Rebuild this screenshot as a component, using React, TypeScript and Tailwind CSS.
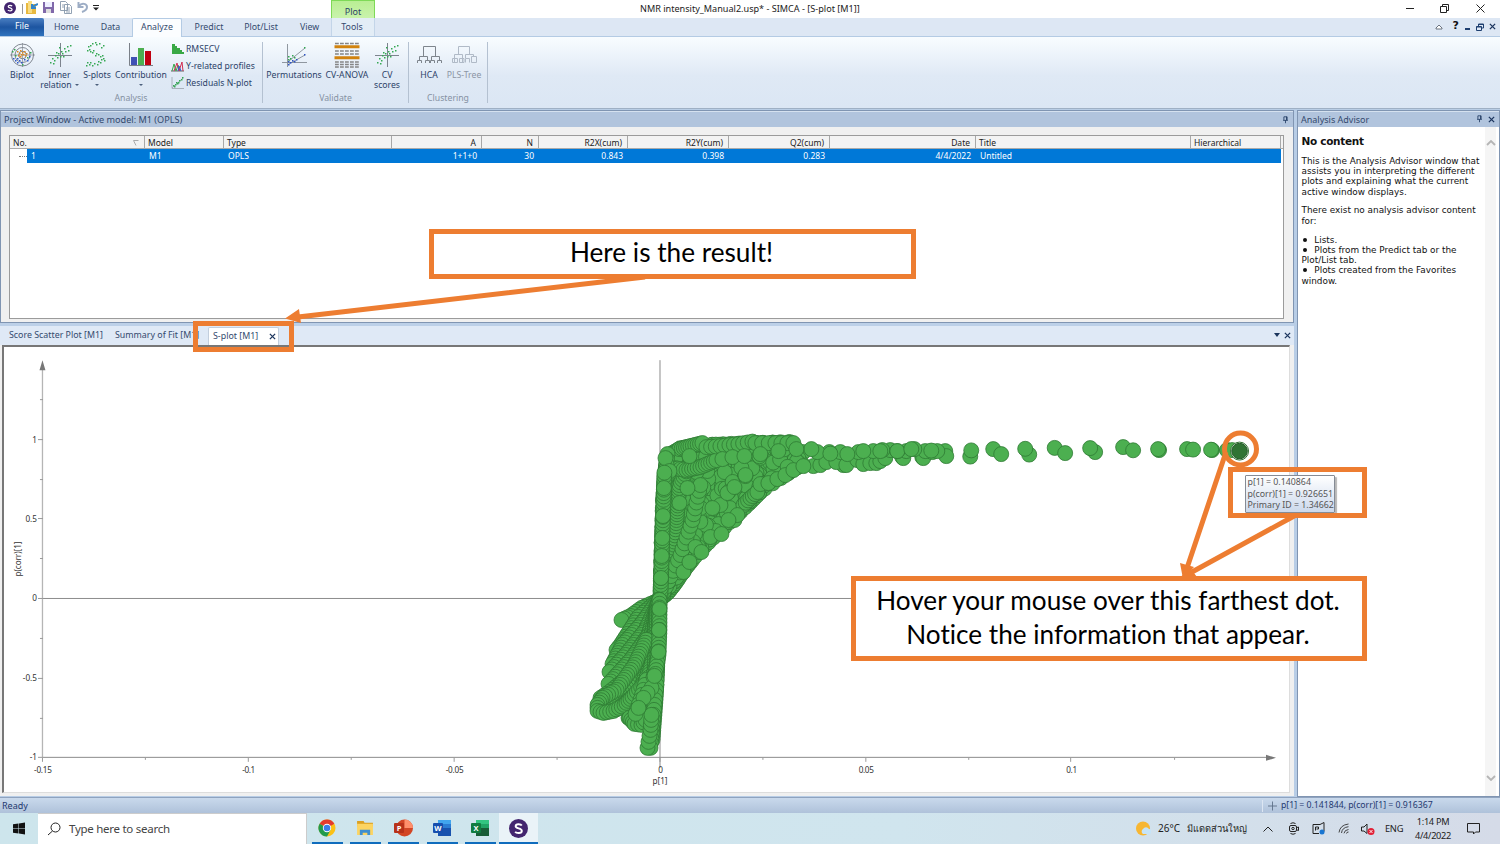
import React from "react";

type Pt = [number, number];

/* ---------- deterministic point cloud ---------- */
let seed = 7;
const rnd = () => {
  seed = (seed * 16807) % 2147483647;
  return seed / 2147483647;
};

const along = (path: Pt[], s: number): Pt => {
  const n = path.length - 1;
  const f = Math.min(n - 0.0001, Math.max(0, s * n));
  const i = Math.floor(f);
  const t = f - i;
  return [path[i][0] + (path[i + 1][0] - path[i][0]) * t, path[i][1] + (path[i + 1][1] - path[i][1]) * t];
};

const strand = (path: Pt[], step: number): Pt[] => {
  const out: Pt[] = [];
  for (let i = 0; i < path.length - 1; i++) {
    const [a, b] = [path[i], path[i + 1]];
    const d = Math.hypot(b[0] - a[0], b[1] - a[1]);
    const n = Math.max(1, Math.round(d / step));
    for (let k = 0; k < n; k++) out.push([a[0] + ((b[0] - a[0]) * k) / n, a[1] + ((b[1] - a[1]) * k) / n]);
  }
  out.push(path[path.length - 1]);
  return out;
};

const upperLeft: Pt[] = [[660, 598], [661, 550], [662.5, 500], [665, 470], [667, 456], [680, 448], [702, 445], [750, 443], [792, 442]];
const lowerRight: Pt[] = [[661, 598], [668, 592], [675, 583], [683, 571], [699, 551], [722, 529], [746, 506], [762, 490], [802, 464]];

const cloud: Pt[] = [];
for (let u = 0; u <= 20; u++) {
  const m = u / 20;
  const bend = (rnd() - 0.5) * 0.1;
  for (let s = 0; s <= 1; s += 0.018 + rnd() * 0.012) {
    const a = along(upperLeft, s);
    const b = along(lowerRight, s);
    const k = Math.min(1, Math.max(0, m + bend));
    cloud.push([a[0] + (b[0] - a[0]) * k, a[1] + (b[1] - a[1]) * k]);
  }
}
for (let i = 0; i < 420; i++) {
  const s = Math.pow(rnd(), 0.75);
  const a = along(upperLeft, s);
  const b = along(lowerRight, s);
  const k = rnd();
  cloud.push([a[0] + (b[0] - a[0]) * k, a[1] + (b[1] - a[1]) * k]);
}
cloud.push(
  ...strand([[661, 596], [672, 560], [676, 520], [679, 485], [690, 463]], 3),
  ...strand([[663, 592], [680, 555], [692, 520], [700, 485]], 6),
  ...strand([[674, 468], [686, 470], [700, 467], [716, 460]], 3),
  ...strand([[679, 449], [690, 446], [702, 443]], 2.4),
  ...strand([[706, 447], [720, 446], [738, 444], [752, 441.5]], 5),
  ...strand([[755, 443], [775, 443], [793, 443]], 6),
  ...strand([[743, 505], [750, 498], [757, 492]], 3),
  ...strand([[667, 454], [666, 464], [665, 484]], 5),
  [683, 572], [689, 562], [695, 547], [710, 537], [721, 534], [701, 552], [734, 520], [737, 515], [728, 520],
  [720, 505], [712, 508], [728, 492], [727, 493], [734, 487], [760, 484], [768, 483], [777, 479], [785, 475], [793, 470], [803, 466],
  [745, 476], [745, 475], [722, 459], [732, 457], [744, 456], [760, 454], [778, 451], [796, 449], [687, 488], [689, 456], [679, 503], [665, 458], [669, 471],
);
const column: Pt[] = [];
for (let y = 595; y > 470; y -= 3.4) column.push([664 - ((y - 470) / 125) * 4, y]);
for (const y of [578, 556, 538, 516, 488]) column.push([664 - ((y - 470) / 125) * 4, y]);

const lower: Pt[] = [];
[
  [[659, 600], [641, 608], [630, 616], [621, 620]],
  [[658, 600], [638, 617], [620, 645], [616, 650]],
  [[658, 600], [640, 625], [622, 645], [612, 664]],
  [[658, 602], [645, 630], [625, 655], [609, 672]],
  [[658, 602], [648, 635], [630, 660], [608, 684]],
  [[657, 606], [650, 640], [630, 675], [609, 692], [600, 698]],
  [[657, 610], [652, 645], [636, 680], [617, 697], [602, 703]],
  [[657, 610], [653, 650], [640, 690], [620, 707]],
  [[656, 612], [652, 655], [643, 690], [628, 718]],
  [[656, 615], [651, 665], [643, 700], [634, 720]],
  [[657, 610], [654, 670], [648, 705], [640, 724]],
  [[659, 605], [657, 660], [655, 700], [652, 740]],
].forEach((p) => lower.push(...strand(p as Pt[], 3.2)));
lower.push(
  ...strand([[646, 640], [634, 665], [616, 690], [602, 698], [597, 705], [597, 711], [603, 713], [613, 711], [624, 705], [632, 697], [645, 682]], 3.2),
  ...strand([[629, 718], [634, 724], [641, 725], [645, 720]], 3),
  ...strand([[646, 680], [640, 700], [635, 714]], 5),
  ...strand([[657, 650], [656, 685], [653, 715], [650, 748], [647, 748], [648, 742], [650, 730], [651, 715]], 5),
  ...strand([[655, 668], [653, 677], [651, 688], [643, 698], [638, 708]], 8),
  ...strand([[659, 600], [659, 630], [658, 655], [655, 674]], 3.6),
  [659, 609], [658.5, 630], [658, 652], [654, 676],
);

const tail: Pt[] = [
  [803, 452], [813, 466], [820, 465], [826, 462], [843, 465], [836, 462], [850, 458], [846, 465], [857, 460], [863, 464], [870, 463],
  [876, 463], [880, 461], [885, 458], [902, 457], [903, 458], [890, 450], [922, 457], [923, 458], [932, 452], [945, 451], [946, 456],
  [925, 451], [914, 449], [906, 451], [897, 451], [882, 450], [873, 451], [858, 452], [840, 452], [829, 452], [817, 452], [811, 449],
  [830, 453.5], [847, 454], [863, 451], [880, 451], [897, 451], [911, 449], [937, 451], [931, 450.5],
  [970, 456.5], [971, 450.3], [993, 449], [1001, 454], [1029, 454.5], [1025, 448.7], [1054.5, 447.8], [1065, 453], [1095, 452], [1090, 448],
  [1123, 447], [1133, 450.2], [1159, 450], [1158, 449], [1187, 449], [1193, 449.5], [1212, 450], [1211, 449.6], [1227, 450], [1232, 450],
];

const Dots = ({ pts }: { pts: Pt[] }) => (
  <g fill="#4caf50" stroke="#2f7a34" strokeWidth="0.8">
    {pts.map(([x, y], i) => (
      <circle key={i} cx={x} cy={y} r="7.5" />
    ))}
  </g>
);

/* ---------- small icons ---------- */
const specks: Pt[] = [[3, 20], [5, 16], [7, 18], [8, 13], [10, 15], [11, 11], [13, 14], [14, 9], [15, 11], [17, 6], [18, 9], [20, 4], [21, 8], [23, 3], [6, 21], [16, 14], [12, 5], [9, 10]];
const Speckle = ({ pts, color = "#35a853" }: { pts: Pt[]; color?: string }) => (
  <g fill={color}>
    {pts.map(([x, y], i) => (
      <rect key={i} x={x} y={y} width="1.5" height="1.5" />
    ))}
  </g>
);
const Ico = ({ children }: { children: React.ReactNode }) => (
  <svg viewBox="0 0 26 26" className="h-[26px] w-[26px] shrink-0" fill="none">
    {children}
  </svg>
);
const BiplotIcon = () => (
  <Ico>
    <g stroke="#747b84" strokeWidth=".9">
      <circle cx="13.500" cy="13" r="11" /><circle cx="13.500" cy="13" r="7.500" /><circle cx="13.500" cy="13" r="3.800" />
      <path d="M13.500 1v24M1 13h25" strokeWidth=".6" />
    </g>
    <Speckle pts={[[8, 9], [10, 11], [11, 8], [13, 10], [15, 9], [17, 11], [9, 13], [12, 12], [14, 12], [16, 13], [11, 14]]} color="#e08a1e" />
    <Speckle pts={[[4, 16], [6, 18], [8, 16], [8, 20], [10, 18], [12, 20], [15, 17], [18, 18], [20, 14]]} color="#3058c8" />
    <Speckle pts={[[3, 9], [5, 7], [21, 10], [18, 15], [13, 22], [6, 13]]} />
  </Ico>
);
const CrossScatter = () => (
  <Ico><path d="M13.500 1v24M1 13.500h24" stroke="#7d848e" /><Speckle pts={specks} /></Ico>
);
const SPlotIcon = () => (
  <Ico>
    <Speckle pts={[[17, 5], [19, 3], [15, 1], [12, 2], [11, 0], [8, 1], [6, 3], [4, 4], [5, 7], [3, 8], [6, 9], [8, 10], [9, 8], [12, 11], [11, 13], [14, 12], [16, 14], [18, 13], [19, 16], [17, 17], [20, 18], [16, 20], [14, 19], [13, 22], [10, 21], [8, 23], [5, 22], [6, 20], [3, 20], [2, 23]]} />
  </Ico>
);
const ContributionIcon = () => (
  <Ico>
    <path d="M1.500 1v22.500H25" stroke="#7a8088" />
    <path fill="#3f51b5" d="M3 15h6v8H3z" /><path fill="#4caf50" d="M10 6h6v17h-6z" /><path fill="#c00010" d="M17 9h6v14h-6z" />
  </Ico>
);
const PermIcon = () => (
  <Ico>
    <path d="M6.500 2v23M1 20.500h25M6 20.500 24 6M7 22.500 24 13" stroke="#858c95" strokeWidth=".9" />
    <Speckle pts={[[23, 5], [7, 14], [9, 16], [11, 13], [7, 17], [13, 15]]} />
    <Speckle pts={[[23, 12], [7, 19], [9, 20], [11, 18], [7, 22], [13, 19], [15, 17]]} color="#2f55c5" />
  </Ico>
);
const AnovaIcon = () => (
  <Ico>
    <g stroke="#858585" strokeDasharray="3.800 1.200"><path d="M1 1.500h24M1 9h24M1 12h24M1 20h24M1 22.500h24M1 25h24" strokeWidth="1.400" /></g>
    <path d="M.5 4.700h25M.5 15.700h25" stroke="#d1830f" strokeWidth="3" />
  </Ico>
);
const TreeIcon = ({ color, many }: { color: string; many?: boolean }) => (
  <Ico>
    {many ? (
      <path d="M7.500 14V4.500h12V14M3.500 18v-3.500h8V18M15.500 18v-3.500h8V18M1.500 21v-2.500h4V21M9.500 21v-2.500h4V21M14.500 21v-2.500h4V21M21.500 21v-2.500h4V21" stroke={color} />
    ) : (
      <path d="M7.500 12.500v-8h11v8M3.500 20v-7.500h8V20M14.500 16v-3.500h8V15M1.500 20.500h5v-4h-5zM8.500 20.500h4.500v-4H8.500zM14.500 20.500v-4h4v4M20.500 20.500v-6h5v6z" stroke={color} />
    )}
  </Ico>
);

const Caret = () => <span className="h-0 w-0 border-x-[2px] border-t-[2.500px] border-x-transparent border-t-[#4b5f7c]" />;

const RibbonButton = ({ icon, a, b, caret, box, muted }: { icon: React.ReactNode; a: string; b?: string; caret?: boolean; box: string; muted?: boolean }) => (
  <div className={`flex flex-col items-center text-[8.700px] leading-[10px] whitespace-nowrap ${box} ${muted ? "text-[#8c96a5]" : "text-[#2c4268]"}`}>
    {icon}
    <span className="mt-[2px]">{a}</span>
    {b ? (
      <span className="flex items-center gap-[3px]">
        {b}
        {caret && <Caret />}
      </span>
    ) : (
      caret && <span className="mt-[4px] flex"><Caret /></span>
    )}
  </div>
);

const Group = ({ title, box, children }: { title: string; box: string; children: React.ReactNode }) => (
  <div className={`flex h-[61px] flex-col border-r border-[#b4c1d1] ${box}`}>
    <div className="flex h-[51px]">{children}</div>
    <div className="text-center text-[8.700px] leading-[10px] text-[#8591a3]">{title}</div>
  </div>
);

const Pin = () => (
  <svg viewBox="0 0 8 10" className="h-[8px] w-[7px]" fill="none" stroke="#1b355d"><path d="M2 5V1h4v4M1 5.500h6M4 5.500V9M5.300 1v4" /></svg>
);
const Cross = ({ c = "#1b355d", size = "h-[7px] w-[7px]" }: { c?: string; size?: string }) => (
  <svg viewBox="0 0 8 8" className={size} stroke={c} strokeWidth="1.500"><path d="m1 1 6 6M7 1 1 7" /></svg>
);

const Badge = ({ size }: { size: string }) => (
  <svg viewBox="0 0 20 20" className={size}>
    <circle cx="10" cy="10" r="10" fill="#43256f" />
    <path d="M13.500 6.800C12.500 5.300 7 4.700 7 7.600c0 2.900 6.500 1.600 6.500 4.900 0 3-5.800 2.700-7 .8" fill="none" stroke="#fff" strokeWidth="2" />
  </svg>
);

/* ---------- title bar and ribbon ---------- */
const TitleBar = () => (
  <div className="flex h-[18px] items-center bg-white text-[10px]">
    <div className="flex w-[331px] items-center pl-[4px]">
      <span className="mt-[-2px]"><Badge size="h-[12px] w-[12px]" /></span>
      <span className="ml-[6px] h-[10px] w-px bg-[#999]" />
      <svg viewBox="0 0 12 13" className="mt-[-4px] ml-[3px] h-[13px] w-[12px]"><path fill="#e9b93f" d="M0 2h5l1 1h4v10H0z" /><path fill="#f8dc83" d="M2 0h4v12H2z" /><path d="M12 3 6 6m0-3v4h4" stroke="#3485ca" strokeWidth="2" fill="none" /></svg>
      <svg viewBox="0 0 11 11" className="mt-[-4px] ml-[5px] h-[11px] w-[11px]"><path fill="#8068aa" d="M0 0h11v11H0z" /><path fill="#eef" d="M2 0h7v5H2z" /><path fill="#ddd" d="M3 7h5v4H3z" /></svg>
      <svg viewBox="0 0 12 13" className="mt-[-4px] ml-[6px] h-[13px] w-[12px]" fill="#fff" stroke="#8697ac" strokeWidth=".9"><path d="M.5.5h5l2 2v7h-7zM4.500 3.500h5l2 2v7h-7z" /><path d="M6 7h4M6 9h4M6 11h4M2 4h2M2 6h2" /></svg>
      <svg viewBox="0 0 12 12" className="mt-[-4px] ml-[5px] h-[12px] w-[12px]" fill="none" stroke="#9dadc5" strokeWidth="2"><path d="M1.500 1v5h5M2 5c3-4 8-2 8 1 0 2-2 4-5 5" /></svg>
      <svg viewBox="0 0 6 6" className="mt-[-3px] ml-[4px] h-[6px] w-[6px]" fill="#222"><path d="M0 0h6v1H0zM0 2.500h6l-3 3z" /></svg>
    </div>
    <div className="h-[18px] w-[44px] border border-b-0 border-[#7ed957] bg-gradient-to-b from-[#b9ee94] to-[#c9f3ab] pt-[5px] text-center text-[9px] leading-[11px] text-[#2c4268]">Plot</div>
    <div className="ml-[265px] w-[224px] text-[9.100px] whitespace-nowrap text-[#222]">NMR intensity_Manual2.usp* - SIMCA - [S-plot [M1]]</div>
    <div className="ml-auto flex items-center pr-[15px] pb-[2px]">
      <span className="h-px w-[8px] bg-[#222]" />
      <svg viewBox="0 0 9 9" className="ml-[26px] h-[9px] w-[9px]" fill="none" stroke="#222"><path d="M.5 2.500h6v6h-6zM2.500 2.500v-2h6v6h-2" /></svg>
      <svg viewBox="0 0 9 9" className="ml-[27px] h-[9px] w-[9px]" stroke="#222"><path d="m.5.5 8 8M8.500.5l-8 8" /></svg>
    </div>
  </div>
);

const tab = "flex items-center justify-center whitespace-nowrap";
const TabBar = () => (
  <div className="flex h-[19px] border-b border-[#b4cbe4] bg-[#dde7f4] text-[8.800px] text-[#344a6e]">
    <div className={`${tab} w-[44px] rounded-t-[2px] bg-gradient-to-b from-[#4a7fc2] via-[#1d55a1] to-[#2f73bd] text-white`}>File</div>
    <div className={`${tab} w-[45px] pt-[2px]`}>Home</div>
    <div className={`${tab} w-[43px] pt-[2px]`}>Data</div>
    <div className={`${tab} h-[19px] w-[50px] rounded-t-[2px] border border-b-0 border-[#b4cbe4] bg-[#fbfdff]`}>Analyze</div>
    <div className={`${tab} w-[54px] pt-[2px]`}>Predict</div>
    <div className={`${tab} w-[50px] pt-[2px]`}>Plot/List</div>
    <div className={`${tab} w-[45px] pt-[2px] pl-[2px]`}>View</div>
    <div className={`${tab} w-[44px] border-x border-[#c3d5e8] bg-[#e3edf6] pt-[2px] pr-[2px]`}>Tools</div>
    <div className="ml-auto flex items-center pr-[4px] pb-px">
      <svg viewBox="0 0 8 6" className="h-[6px] w-[8px]" fill="#fff" stroke="#6b7481"><path d="m1 4 3-3 3 3v1H1z" /></svg>
      <span className="ml-[10px] font-['DejaVu_Sans'] text-[11px] font-bold text-[#111]">?</span>
      <span className="mt-[5px] ml-[6px] h-[2px] w-[5px] bg-[#1e3f70]" />
      <svg viewBox="0 0 8 8" className="ml-[6px] h-[8px] w-[8px]" fill="none" stroke="#1e3f70"><path d="M.5 3.500h5v4h-5zM2.500 3V1h5v4H6M.5 4h5M2.500 1.500h5" /></svg>
      <span className="ml-[5px] flex"><Cross /></span>
    </div>
  </div>
);

const SmallItem = ({ icon, label }: { icon: React.ReactNode; label: string }) => (
  <div className="flex h-[17.300px] shrink-0 items-center gap-[2px] text-[8.650px] leading-[10px] whitespace-nowrap text-[#2c4268]">
    <svg viewBox="0 0 13 12" className="h-[12px] w-[13px]" fill="none">{icon}</svg>
    {label}
  </div>
);

const Ribbon = () => (
  <div className="flex h-[72px] border-b border-[#9fb0c5] bg-gradient-to-b from-[#f8fcff] via-[#dfe9f5] via-55% to-[#dbe6f4] pt-[5px]">
    <Group title="Analysis" box="w-[263px]">
      <RibbonButton box="w-[44px]" icon={<BiplotIcon />} a="Biplot" />
      <RibbonButton box="w-[31px]" icon={<CrossScatter />} a="Inner" b="relation" caret />
      <RibbonButton box="w-[44px]" icon={<SPlotIcon />} a="S-plots" caret />
      <RibbonButton box="w-[44px]" icon={<ContributionIcon />} a="Contribution" caret />
      <div className="mt-[-2px] ml-[8px] flex flex-col">
        <SmallItem label="RMSECV" icon={<path d="M1 1v10h12v-2h-2V7H9V5H6V3H4V1z" fill="#39a845" />} />
        <SmallItem label="Y-related profiles" icon={<><path d="M0 11h13" stroke="#666" /><path d="m1 11 2-7 2 7m0 0 2-6 2 6" stroke="#36a84b" /><path d="m3 11 3-8 2 8 3-9 1 9" stroke="#d22d52" /><path d="m7 11 1-5 2 5" stroke="#3b57cb" /></>} />
        <SmallItem label="Residuals N-plot" icon={<><path d="M1 0v11.500h12M1 11 12 1" stroke="#9aa2ab" strokeWidth=".8" /><Speckle pts={[[2, 8], [4, 7], [5, 5], [7, 5], [8, 3], [10, 2], [11, 0], [3, 9], [6, 6]]} /></>} />
      </div>
    </Group>
    <Group title="Validate" box="w-[146px]">
      <RibbonButton box="w-[62px]" icon={<PermIcon />} a="Permutations" />
      <RibbonButton box="w-[44px]" icon={<AnovaIcon />} a="CV-ANOVA" />
      <RibbonButton box="w-[36px]" icon={<CrossScatter />} a="CV" b="scores" />
    </Group>
    <Group title="Clustering" box="w-[79px]">
      <RibbonButton box="w-[40px]" icon={<TreeIcon color="#7e858d" many />} a="HCA" />
      <RibbonButton box="w-[30px]" icon={<TreeIcon color="#b0bac7" />} a="PLS-Tree" muted />
    </Group>
  </div>
);

/* ---------- project window ---------- */
const cols: { h: string; v: string; w: string; right?: boolean }[] = [
  { h: "No.", v: "1", w: "w-[135px]" },
  { h: "Model", v: "M1", w: "w-[79px]" },
  { h: "Type", v: "OPLS", w: "w-[168px]" },
  { h: "A", v: "1+1+0", w: "w-[90px]", right: true },
  { h: "N", v: "30", w: "w-[57px]", right: true },
  { h: "R2X(cum)", v: "0.843", w: "w-[89px]", right: true },
  { h: "R2Y(cum)", v: "0.398", w: "w-[101px]", right: true },
  { h: "Q2(cum)", v: "0.283", w: "w-[101px]", right: true },
  { h: "Date", v: "4/4/2022", w: "w-[146px]", right: true },
  { h: "Title", v: "Untitled", w: "w-[215px]" },
  { h: "Hierarchical", v: "", w: "w-[90px]" },
];

const ProjectWindow = () => (
  <div className="flex h-[213px] flex-col border border-[#8095b2] bg-[#f0f0f0]">
    <div className="flex h-[16px] items-center justify-between border-t border-[#d5e1ef] bg-[#b1c4dd] pr-[4px] pl-[3px] text-[9.150px] text-[#33496d]">
      Project Window - Active model: M1 (OPLS)
      <Pin />
    </div>
    <div className="mt-[8px] ml-[8px] h-[184px] w-[1275px] border border-[#9b9b9b] bg-white text-[8.500px] leading-[12px]">
      <div className="flex h-[13px] border-b border-[#aaa] bg-[#f3f3f3] text-[#222]">
        {cols.map((c) => (
          <div key={c.h} className={`flex shrink-0 items-center border-r border-[#a8a8a8] pt-[2px] pr-[5px] pl-[3px] ${c.w} ${c.right ? "justify-end" : "justify-between"}`}>
            {c.h}
            {c.h === "No." && <svg viewBox="0 0 6 6" className="h-[6px] w-[6px]" fill="none" stroke="#aaa"><path d="M5.500.5H.5L3 5.500" /></svg>}
          </div>
        ))}
      </div>
      <div className="flex h-[14px] items-center pr-[2px]">
        <span className="ml-[9px] w-[8px] shrink-0 border-t border-dotted border-[#777]" />
        <div className="flex h-[14px] grow items-center bg-[#0078d7] text-white">
          {cols.map((c, i) => (
            <div key={c.h} className={`shrink-0 pr-[5px] pl-[4px] ${i === 0 ? "w-[118px]" : c.w} ${c.right ? "text-right" : ""} ${i === 10 ? "hidden" : ""}`}>{c.v}</div>
          ))}
        </div>
      </div>
    </div>
  </div>
);

/* ---------- plot ---------- */
const yTicks: [number, string][] = [[439.500, "1"], [518.500, "0.5"], [598.500, "0"], [678, "-0.5"], [757.500, "-1"]];
const xTicks: [number, string, number][] = [[42, "-0.15", 18], [248, "-0.1", 13], [454, "-0.05", 18], [660, "0", 4.500], [866, "0.05", 15], [1071.500, "0.1", 11]];

const Plot = () => (
  <svg viewBox="3 347 1286 445" className="h-[445px] w-[1286px]" fontFamily="Noto Sans, sans-serif" fontSize="8.200" fill="#333">
    <g stroke="#9a9a9a" fill="none">
      <path d="M659.500 360v408M42 598.500h1228M42 757.500h1226" stroke="#8c8c8c" />
      <path d="M41.500 368v390" stroke="#b5b5b5" strokeWidth="1.300" />
      {yTicks.map(([y]) => <path key={y} d={`M37 ${Math.floor(y)}.5h5`} />)}
      {[399, 479, 558, 638, 718].map((y) => <path key={y} d={`M39 ${y}.5h3`} />)}
      {xTicks.map(([x]) => <path key={x} d={`M${Math.floor(x) - 0.5} 758v4`} />)}
      {[144, 350, 556, 762, 968, 1174].map((x) => <path key={x} d={`M${x}.5 758v2`} />)}
    </g>
    <path d="M41.500 360l3 10h-6zM1276 758l-10-3v6z" fill="#777" />
    {yTicks.map(([y, s]) => <text key={s} x="36" y={y + 3} textAnchor="end">{s}</text>)}
    {xTicks.map(([x, s, w]) => <text key={s} x={x} y="773" textAnchor="middle" textLength={w}>{s}</text>)}
    <text x="659.500" y="784" textAnchor="middle">p[1]</text>
    <text transform="translate(20 559) rotate(-90)" textAnchor="middle" textLength="35">p(corr)[1]</text>
    <Dots pts={tail} />
    <Dots pts={cloud} />
    <Dots pts={column} />
    <Dots pts={lower} />
    <circle cx="1239.500" cy="451" r="9" fill="#fff" stroke="#2e7031" />
    <circle cx="1239.500" cy="451" r="7.800" fill="#2f7434" stroke="#245b29" />
  </svg>
);

const PlotArea = () => (
  <div className="flex grow flex-col">
    <div className="flex h-[22px] items-end border-t-[3px] border-[#bcd0e8] bg-[#dfe9f6] pl-[9px] text-[8.850px] whitespace-nowrap text-[#344a6e]">
      <div className="flex h-[18px] w-[106px] items-center">Score Scatter Plot [M1]</div>
      <div className="flex h-[18px] w-[93px] items-center">Summary of Fit [M1]</div>
      <div className="flex h-[18px] w-[71px] items-center justify-between rounded-t-[2px] border border-b-0 border-[#c2cedd] bg-white pr-[2px] pl-[4px]">S-plot [M1]<Cross /></div>
      <div className="ml-auto flex h-[19px] items-center gap-[4px] pr-[3px] pb-px">
        <span className="h-0 w-0 border-x-[3px] border-t-[4px] border-x-transparent border-t-[#1b355d]" />
        <Cross />
      </div>
    </div>
    <div className="h-[451px] bg-[#f0f0f0] pl-[2px] pr-[4px]">
      <div className="flex h-[448px] border-t-[2px] border-l-2 border-r border-b border-[#777] border-r-[#ddd] border-b-[#ddd] bg-white">
        <Plot />
      </div>
    </div>
  </div>
);

const Bullet = () => <span className="mr-[6px] inline-block h-[4px] w-[4px] translate-x-[1px] -translate-y-[1px] rounded-full bg-[#111]" />;

const Advisor = () => (
  <div className="flex w-[203px] flex-col border border-[#8095b2] bg-white">
    <div className="flex h-[16px] items-center border-t border-[#d5e1ef] bg-[#b1c4dd] pr-[4px] pl-[3px] text-[9px] text-[#33496d]">
      Analysis Advisor
      <span className="ml-auto flex items-center gap-[5px] pb-px"><Pin /><Cross /></span>
    </div>
    <div className="flex grow">
      <div className="w-[187px] pt-[8px] pl-[3.500px] font-['DejaVu_Sans',sans-serif] text-[8.900px] leading-[10.200px] whitespace-nowrap text-[#111]">
        <div className="text-[10.500px] leading-[12px] font-bold tracking-[-.3px]">No content</div>
        <p className="mt-[9px]">This is the Analysis Advisor window that<br />assists you in interpreting the different<br />plots and explaining what the current<br />active window displays.</p>
        <p className="mt-[8.500px]">There exist no analysis advisor content<br />for:</p>
        <p className="mt-[9px]"><Bullet />&nbsp;Lists.<br /><Bullet />&nbsp;Plots from the Predict tab or the<br />Plot/List tab.<br /><Bullet />&nbsp;Plots created from the Favorites<br />window.</p>
      </div>
      <div className="flex w-[11px] flex-col items-center justify-between bg-[#f5f5f5] pt-[13px] pb-[15px]">
        <svg viewBox="0 0 10 6" className="h-[6px] w-[10px]" fill="none" stroke="#b5b5b5" strokeWidth="1.800"><path d="m1 5 4-4 4 4" /></svg>
        <svg viewBox="0 0 10 6" className="h-[6px] w-[10px]" fill="none" stroke="#b5b5b5" strokeWidth="1.800"><path d="m1 1 4 4 4-4" /></svg>
      </div>
    </div>
  </div>
);

/* ---------- task bar ---------- */
const Office = ({ l, a, b, c, d, round }: { l: string; a: string; b: string; c: string; d: string; round?: boolean }) => (
  <svg viewBox="0 0 19 18" className="h-[18px] w-[19px]">
    {round ? (
      <><circle cx="10.500" cy="9" r="8.500" fill={b} /><path d="M10.500.5a8.500 8.500 0 0 1 8.500 8.500h-8.500z" fill={c} /></>
    ) : (
      <><path fill={a} d="M5 1h13v16H5z" /><path fill={b} d="M5 5h13v4H5z" /><path fill={c} d="M5 1h13v4H5z" /></>
    )}
    <rect y="4" width="10" height="10" rx="1" fill={d} />
    <text x="5" y="11.700" textAnchor="middle" fontFamily="Open Sans" fontWeight="700" fontSize="7.500" fill="#fff">{l}</text>
  </svg>
);

const AppSlot = ({ active, children }: { active?: boolean; children: React.ReactNode }) => (
  <div className={`flex h-[31px] w-[38.300px] flex-col items-center justify-between ${active ? "bg-[#eaf3f8]" : ""}`}>
    <span className="flex h-[29px] items-center pt-px">{children}</span>
    <span className={`h-[2px] bg-[#0f6cbd] ${active ? "w-full" : "w-[31px]"}`} />
  </div>
);

const TaskBar = () => (
  <div className="flex h-[31px] items-center bg-gradient-to-r from-[#cde5ec] via-[#d0e5ee] via-60% to-[#d5dbe8]">
    <div className="flex w-[38px] justify-center">
      <svg viewBox="0 0 12 12" className="h-[13px] w-[12px]" fill="#111"><path d="M0 1.700 5.500 1v4.700H0zM6 .9 12 0v5.700H6zM0 6.300h5.500V11L0 10.300zM6 6.300h6V12l-6-.9z" /></svg>
    </div>
    <div className="flex h-[31px] w-[269px] items-center border-t border-r border-[#ccc] bg-white pl-[9px] text-[11.500px] tracking-[-.27px] text-[#444]">
      <svg viewBox="0 0 14 14" className="mr-[8px] h-[14px] w-[14px]" fill="none" stroke="#222"><circle cx="8.500" cy="5.500" r="4.500" /><path d="M5.500 9 1 13" /></svg>
      Type here to search
    </div>
    <div className="flex pl-[1px]">
      <AppSlot>
        <svg viewBox="0 0 18 18" className="h-[18px] w-[18px]">
          <circle cx="9" cy="9" r="8.500" fill="#fbc116" />
          <path d="M9 9 1.600 4.700A8.500 8.500 0 0 1 16.400 4.700z" fill="#e33b2e" /><path d="M1.600 4.700A8.500 8.500 0 0 0 9 17.500L12.500 11 9 9z" fill="#229a4c" />
          <circle cx="9" cy="9" r="4.200" fill="#fff" /><circle cx="9" cy="9" r="3.300" fill="#3b7de9" />
        </svg>
      </AppSlot>
      <AppSlot>
        <svg viewBox="0 0 17 15" className="h-[14px] w-[16px]"><path fill="#dba022" d="M0 0h7l1 2h9v4H0z" /><path fill="#fcd462" d="M0 3h17v12H0z" /><path fill="#3f8fd0" d="M3 15V9.500h11V15h-3v-2.500H6V15z" /></svg>
      </AppSlot>
      <AppSlot><Office l="P" a="#d35230" b="#d24625" c="#ff8f6b" d="#b7321a" round /></AppSlot>
      <AppSlot><Office l="W" a="#1852ae" b="#2b7cd3" c="#41a5ee" d="#174fae" /></AppSlot>
      <AppSlot><Office l="X" a="#185c37" b="#21a366" c="#33c481" d="#107c41" /></AppSlot>
      <AppSlot active><Badge size="h-[19px] w-[19px]" /></AppSlot>
    </div>
    <div className="ml-auto flex items-center text-[10px] whitespace-nowrap text-[#222]">
      <svg viewBox="0 0 15 15" className="h-[15px] w-[15px]"><circle cx="7" cy="7.500" r="7" fill="#f7b632" /><path d="M7 13a3 3 0 0 1 0-5 3.500 3.500 0 0 1 6 0 2.500 2.500 0 0 1 0 5z" fill="#c5e4f8" /></svg>
      <span className="ml-[7px] w-[29px]">26°C</span>
      <span className="flex w-[61px] pt-px text-[9.300px]">มีแดดส่วนใหญ่</span>
      <svg viewBox="0 0 10 6" className="ml-[15px] h-[6px] w-[10px]" fill="none" stroke="#222"><path d="m.5 5.500 4.500-4.500 4.500 4.500" /></svg>
      <svg viewBox="0 0 10 13" className="ml-[16px] h-[13px] w-[10px]" fill="none" stroke="#222"><rect x=".5" y="3.500" width="7" height="6" rx="1.500" /><circle cx="4" cy="6.500" r="1.200" /><path d="M8 5.500 9.500 5v3.500L8 8M1.500 1.500Q4 0 6.500 1.500M1.500 11.500Q4 13 6.500 11.500" /></svg>
      <svg viewBox="0 0 13 13" className="ml-[13px] h-[13px] w-[13px]" fill="none" stroke="#222"><path d="M1 2.500h7l4-2v9H8M1 2.500v9h6M3.500 8.500V5h3v2h-2" /><circle cx="10" cy="10" r="2.500" fill="#1976d2" stroke="none" /></svg>
      <svg viewBox="0 0 11 11" className="ml-[13px] h-[11px] w-[11px]" fill="none" stroke="#333"><path d="M1 9.500Q2 2 10.500 1M3.500 10Q4 4.500 10.500 3.700M6 10.300Q6.500 7 10.500 6.500M8.500 10.500q0-1.500 2-1.500" strokeWidth=".9" /></svg>
      <svg viewBox="0 0 14 12" className="ml-[12px] h-[12px] w-[14px]" fill="none" stroke="#222"><path d="M.5 4v4h2.500L6 10.500V1L3 4z" /><circle cx="10" cy="8.500" r="3.500" fill="#e11f35" stroke="none" /><path d="m8.500 7 3 3m0-3-3 3" stroke="#fff" strokeWidth=".9" /></svg>
      <span className="ml-[10px] w-[20px] text-[9.300px] tracking-[-.3px]">ENG</span>
      <span className="ml-[9px] w-[38px] text-center text-[9.200px] leading-[14px] tracking-[-.3px]">1:14 PM<br />4/4/2022</span>
      <svg viewBox="0 0 13 13" className="mr-[20px] ml-[15px] h-[13px] w-[13px]" fill="none" stroke="#222"><path d="M.5 1.500h12v8.500H8.500l-2 2v-2h-6z" /></svg>
    </div>
  </div>
);

/* ---------- annotations laid over the desktop ---------- */
const Annotations = () => (
  <>
    <div className="absolute top-[475px] left-[1245px] h-[38px] w-[90px] rounded-[1px] border border-[#858b95] bg-gradient-to-b from-white to-[#ccd9ec] pt-px pl-[1.500px] text-[8.800px] leading-[11.700px] whitespace-nowrap text-[#555] shadow-[2px_2px_1px_#8889]">
      p[1] = 0.140864<br />p(corr)[1] = 0.926651<br />Primary ID = 1.34662
    </div>
    <svg viewBox="0 0 1500 844" className="absolute top-0 left-0 h-[844px] w-[1500px]" fill="none" stroke="#ed7d31" strokeWidth="5">
      <path d="M645 277 298 317M1226 452 1187 568M1296 515 1192 572" />
      <path d="M285 318.500 299 309l2 14zM1183 579l-3-16 14 4zM1180 579l8-14 9 12z" fill="#ed7d31" stroke="none" />
      <circle cx="1240.500" cy="449" r="16" />
    </svg>
    <div className="absolute top-[321px] left-[193px] h-[31px] w-[101px] border-[5px] border-[#ed7d31]" />
    <div className="absolute top-[467px] left-[1228px] h-[51px] w-[139px] border-[5px] border-[#ed7d31]" />
    <div className="absolute top-[229px] left-[429px] flex h-[50px] w-[487px] items-center justify-center border-[5px] border-[#ed7d31] bg-white pr-[2px] pb-[3px] font-['Lato',sans-serif] text-[26.200px] whitespace-nowrap text-black [font-variant-ligatures:none]">Here is the result!</div>
    <div className="absolute top-[576px] left-[851px] flex h-[85px] w-[516px] items-center justify-center border-[5px] border-[#ed7d31] bg-white pr-[2px] pb-[4px] text-center font-['Lato',sans-serif] text-[26.150px] leading-[34px] whitespace-nowrap text-black [font-variant-ligatures:none]">
      Hover your mouse over this farthest dot.<br />Notice the information that appear.
    </div>
  </>
);

export default function App() {
  return (
    <div className="relative flex h-[844px] w-[1500px] flex-col overflow-hidden bg-white font-['Noto_Sans','Open_Sans',sans-serif]">
      <TitleBar />
      <TabBar />
      <Ribbon />
      <div className="flex h-[688px] bg-[#b8cde6] pt-px">
        <div className="flex w-[1294px] flex-col">
          <ProjectWindow />
          <PlotArea />
        </div>
        <div className="ml-[3px] flex"><Advisor /></div>
      </div>
      <div className="flex h-[16px] items-center justify-between border-t border-[#8fa3bf] bg-gradient-to-b from-[#c9d9ec] to-[#afc2da] pl-[2px] text-[9px] text-[#1f3970]">
        Ready
        <span className="flex h-[12px] w-[238px] items-center border-l border-[#dce6f2] pl-[5px] text-[8.700px] whitespace-nowrap">
          <svg viewBox="0 0 10 10" className="mr-[4px] h-[10px] w-[9px]" stroke="#5d7088"><path d="M5 0v10M0 5h10" /></svg>
          p[1] = 0.141844, p(corr)[1] = 0.916367
        </span>
      </div>
      <TaskBar />
      <Annotations />
    </div>
  );
}
